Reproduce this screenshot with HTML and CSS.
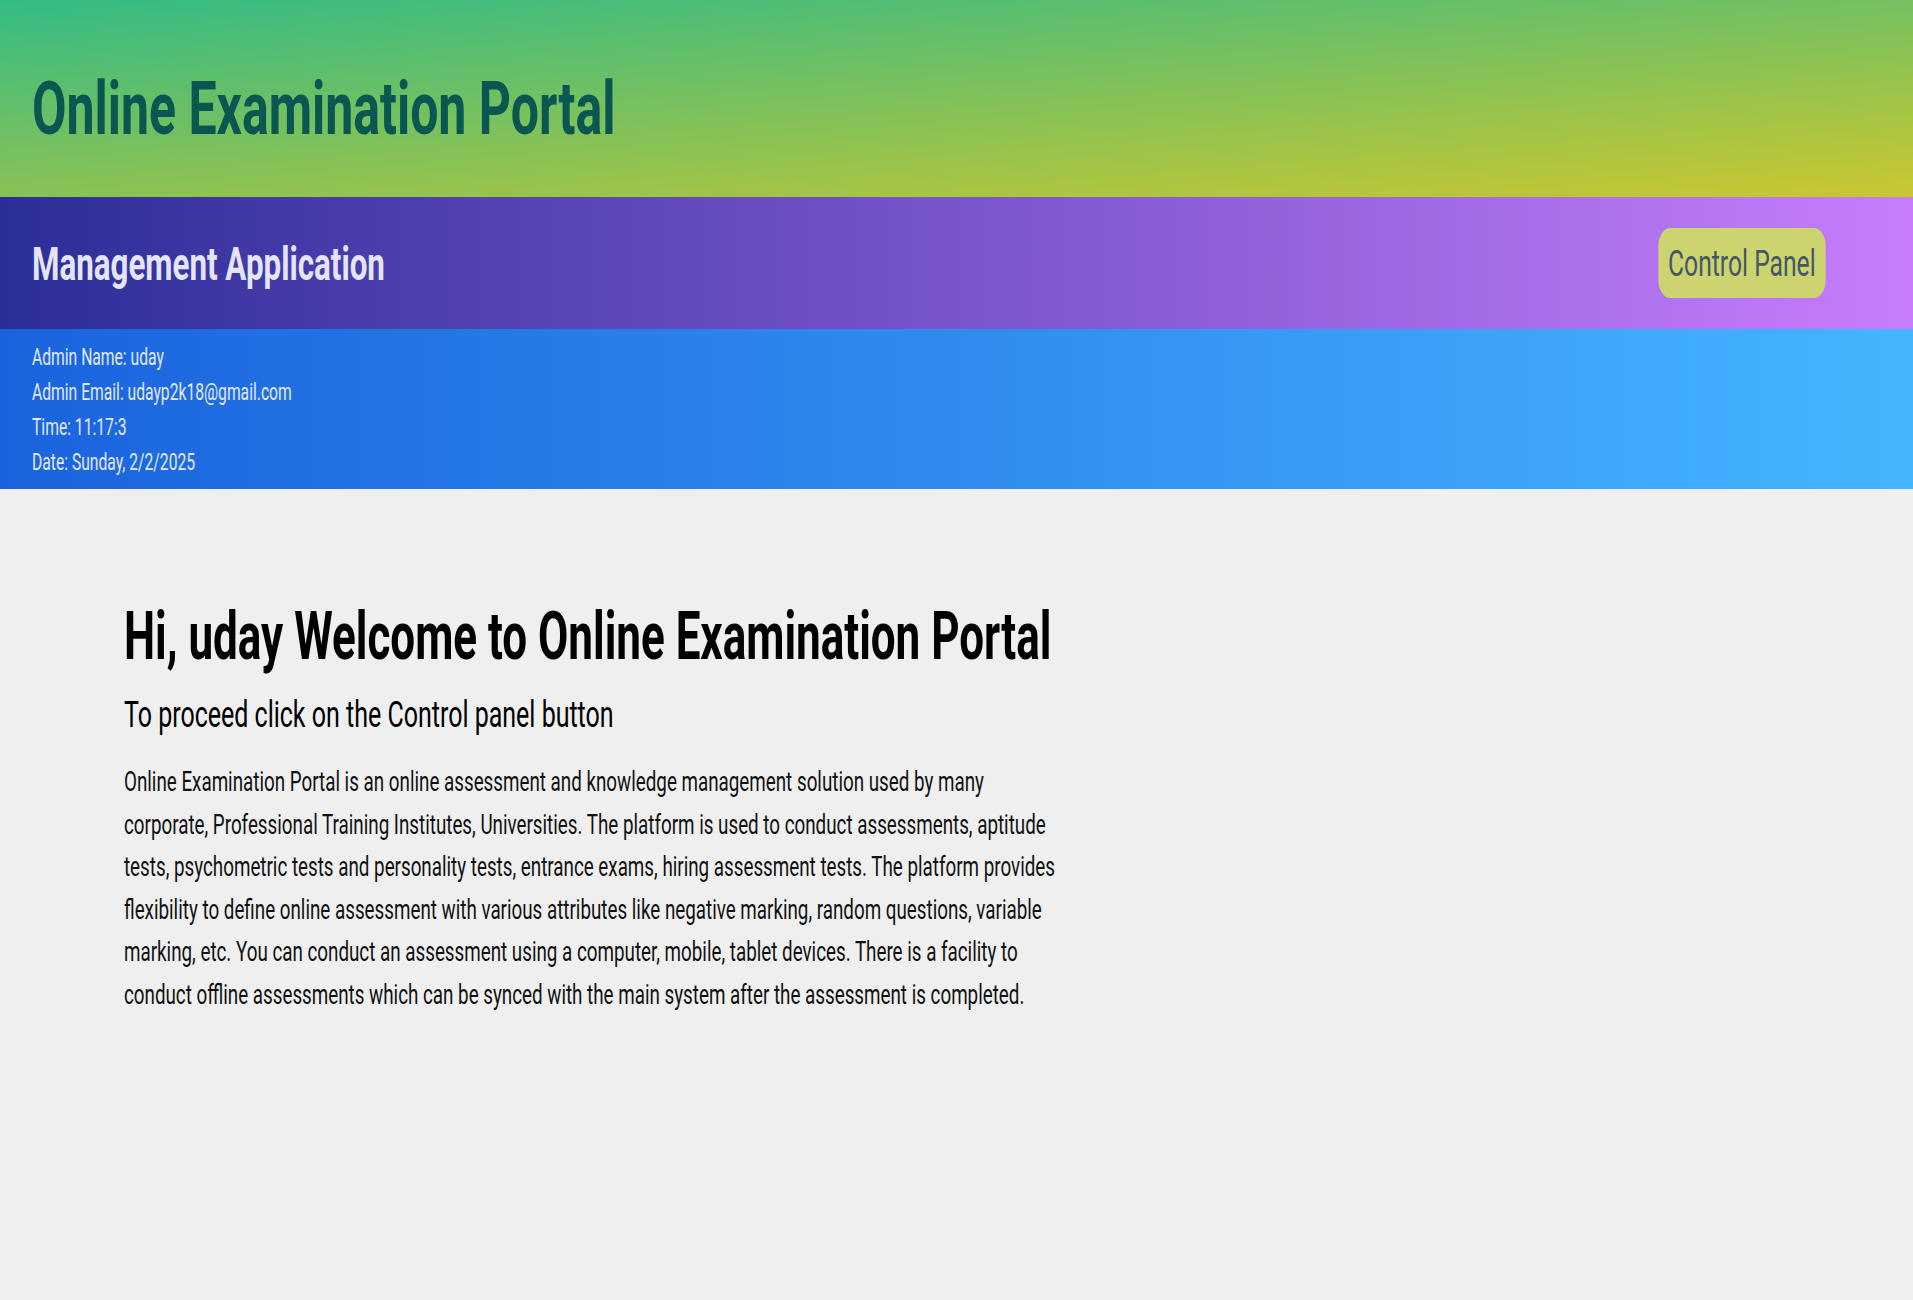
FILE: index.html
```html
<!DOCTYPE html>
<html lang="en">
<head>
<meta charset="utf-8">
<title>Online Examination Portal</title>
<link rel="stylesheet" href="styles.css">
</head>
<body>
<div class="viewport">
<div class="page">
  <header class="banner">
    <h1 class="banner-title">Online Examination Portal</h1>
  </header>
  <nav class="appbar">
    <h2 class="appbar-title">Management Application</h2>
    <button class="cp-btn" type="button">Control Panel</button>
  </nav>
  <section class="admin-info">
    <div class="admin-line">Admin Name: uday</div>
    <div class="admin-line">Admin Email: udayp2k18@gmail.com</div>
    <div class="admin-line">Time: 11:17:3</div>
    <div class="admin-line">Date: Sunday, 2/2/2025</div>
  </section>
  <main class="welcome">
    <h2 class="welcome-title">Hi, uday Welcome to Online Examination Portal</h2>
    <h3 class="welcome-sub">To proceed click on the Control panel button</h3>
    <p class="welcome-text">Online Examination Portal is an online assessment and knowledge management solution used by many corporate, Professional Training Institutes, Universities. The platform is used to conduct assessments, aptitude tests, psychometric tests and personality tests, entrance exams, hiring assessment tests. The platform provides flexibility to define online assessment with various attributes like negative marking, random questions, variable marking, etc. You can conduct an assessment using a computer, mobile, tablet devices. There is a facility to conduct offline assessments which can be synced with the main system after the assessment is completed.</p>
  </main>
</div>
</div>
</body>
</html>
```
FILE: styles.css
```css
html, body {
  margin: 0;
  padding: 0;
  overflow: hidden;
  background: #efefef;
}

.viewport {
  width: 100%;
  height: 1300px;
  overflow: hidden;
}

.page {
  width: 2870px;
  min-height: 1300px;
  transform: scaleX(0.66655);
  transform-origin: 0 0;
  font-family: Roboto, "Liberation Sans", sans-serif;
  background: #efefef;
}

.banner {
  height: 197px;
  box-sizing: border-box;
  padding: 64px 48px 0;
  background: linear-gradient(177deg, #33bb85, #cbc72f);
}

.banner-title {
  margin: 0;
  font-size: 75px;
  font-weight: 700;
  line-height: normal;
  color: #0a5650;
}

.appbar {
  height: 132px;
  box-sizing: border-box;
  display: flex;
  align-items: center;
  justify-content: space-between;
  padding: 0 131px 0 48px;
  background: linear-gradient(to right, #2b2e98, #c77dfe);
}

.appbar-title {
  margin: 0;
  font-size: 47px;
  font-weight: 700;
  line-height: normal;
  color: #e4e4fb;
}

.cp-btn {
  font-family: inherit;
  font-size: 37px;
  font-weight: 400;
  line-height: normal;
  white-space: nowrap;
  color: #475569;
  background: #cbd46e;
  border: none;
  border-radius: 18px;
  height: 70px;
  padding: 0 15px;
}

.admin-info {
  height: 160px;
  box-sizing: border-box;
  padding: 10.5px 48px 0;
  background: linear-gradient(to right, #1a63de, #45b5ff);
  color: #e3e8f7;
  font-size: 23.5px;
  line-height: 35px;
}

.welcome {
  width: 1406px;
  padding: 109px 0 0 186px;
}

.welcome-title {
  margin: 0 0 17px;
  font-size: 66px;
  font-weight: 700;
  line-height: normal;
  color: #000;
}

.welcome-sub {
  margin: 0 0 25px;
  font-size: 37.5px;
  font-weight: 400;
  line-height: normal;
  color: #000;
}

.welcome-text {
  margin: 0;
  font-size: 28.2px;
  line-height: 42.5px;
  color: #111;
}
```
